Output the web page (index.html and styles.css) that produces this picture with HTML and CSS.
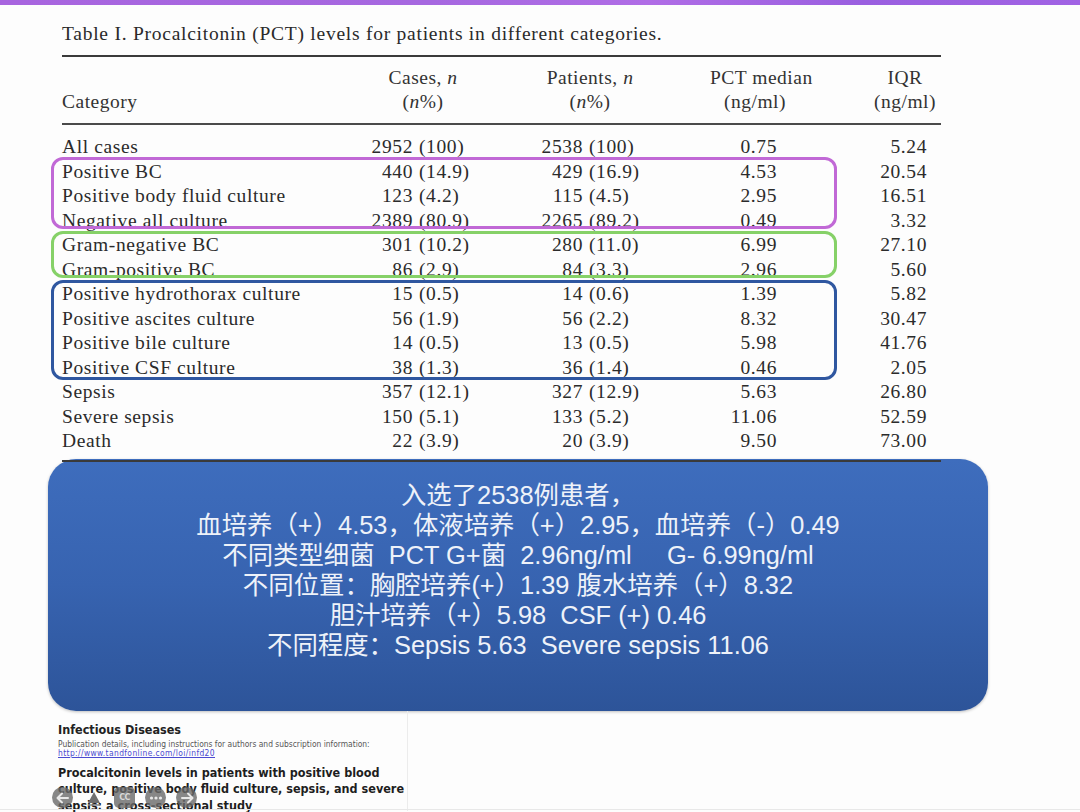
FILE: index.html
```html
<!DOCTYPE html>
<html lang="zh">
<head>
<meta charset="utf-8">
<title>PCT table</title>
<link rel="stylesheet" href="styles.css">
</head>
<body>
<div class="topbar"></div>
<main class="page">
  <div class="table-wrap">
    <p class="caption">Table I. Procalcitonin (PCT) levels for patients in different categories.</p>
    <div class="thead">
      <div class="th cat">Category</div>
      <div class="th cases">Cases, <i>n</i><br>(<i>n</i>%)</div>
      <div class="th pats">Patients, <i>n</i><br>(<i>n</i>%)</div>
      <div class="th pct">PCT median<br>(ng/ml)</div>
      <div class="th iqr">IQR<br>(ng/ml)</div>
    </div>
    <div class="tbody">
      <div class="row"><span class="c">All cases</span><span class="n1"><b>2952</b>(100)</span><span class="n2"><b>2538</b>(100)</span><span class="m">0.75</span><span class="q">5.24</span></div>
      <div class="row"><span class="c">Positive BC</span><span class="n1"><b>440</b>(14.9)</span><span class="n2"><b>429</b>(16.9)</span><span class="m">4.53</span><span class="q">20.54</span></div>
      <div class="row"><span class="c">Positive body fluid culture</span><span class="n1"><b>123</b>(4.2)</span><span class="n2"><b>115</b>(4.5)</span><span class="m">2.95</span><span class="q">16.51</span></div>
      <div class="row"><span class="c">Negative all culture</span><span class="n1"><b>2389</b>(80.9)</span><span class="n2"><b>2265</b>(89.2)</span><span class="m">0.49</span><span class="q">3.32</span></div>
      <div class="row"><span class="c">Gram-negative BC</span><span class="n1"><b>301</b>(10.2)</span><span class="n2"><b>280</b>(11.0)</span><span class="m">6.99</span><span class="q">27.10</span></div>
      <div class="row"><span class="c">Gram-positive BC</span><span class="n1"><b>86</b>(2.9)</span><span class="n2"><b>84</b>(3.3)</span><span class="m">2.96</span><span class="q">5.60</span></div>
      <div class="row"><span class="c">Positive hydrothorax culture</span><span class="n1"><b>15</b>(0.5)</span><span class="n2"><b>14</b>(0.6)</span><span class="m">1.39</span><span class="q">5.82</span></div>
      <div class="row"><span class="c">Positive ascites culture</span><span class="n1"><b>56</b>(1.9)</span><span class="n2"><b>56</b>(2.2)</span><span class="m">8.32</span><span class="q">30.47</span></div>
      <div class="row"><span class="c">Positive bile culture</span><span class="n1"><b>14</b>(0.5)</span><span class="n2"><b>13</b>(0.5)</span><span class="m">5.98</span><span class="q">41.76</span></div>
      <div class="row"><span class="c">Positive CSF culture</span><span class="n1"><b>38</b>(1.3)</span><span class="n2"><b>36</b>(1.4)</span><span class="m">0.46</span><span class="q">2.05</span></div>
      <div class="row"><span class="c">Sepsis</span><span class="n1"><b>357</b>(12.1)</span><span class="n2"><b>327</b>(12.9)</span><span class="m">5.63</span><span class="q">26.80</span></div>
      <div class="row"><span class="c">Severe sepsis</span><span class="n1"><b>150</b>(5.1)</span><span class="n2"><b>133</b>(5.2)</span><span class="m">11.06</span><span class="q">52.59</span></div>
      <div class="row"><span class="c">Death</span><span class="n1"><b>22</b>(3.9)</span><span class="n2"><b>20</b>(3.9)</span><span class="m">9.50</span><span class="q">73.00</span></div>
    </div>
    <div class="hl hl-purple"></div>
    <div class="hl hl-green"></div>
    <div class="hl hl-blue"></div>
  </div>

  <section class="note">
    <p>入选了2538例患者，</p>
    <p>血培养（+）4.53，体液培养（+）2.95，血培养（-）0.49</p>
    <p>不同类型细菌&nbsp; PCT G+菌&nbsp; 2.96ng/ml&nbsp;&nbsp;&nbsp;&nbsp; G- 6.99ng/ml</p>
    <p>不同位置：胸腔培养(+）1.39 腹水培养（+）8.32</p>
    <p>胆汁培养（+）5.98&nbsp; CSF (+) 0.46</p>
    <p>不同程度：Sepsis 5.63&nbsp; Severe sepsis 11.06</p>
  </section>

  <section class="doc">
    <h2 class="journal">Infectious Diseases</h2>
    <p class="pubinfo">Publication details, including instructions for authors and subscription information:</p>
    <p class="publink">http://www.tandfonline.com/loi/infd20</p>
    <h1 class="article">Procalcitonin levels in patients with positive blood culture, positive body fluid culture, sepsis, and severe sepsis: a cross-sectional study</h1>
  </section>
</main>

<div class="controls">
  <span class="ctl round"><svg viewBox="0 0 20 20" width="20" height="20"><path d="M15 10H5M9 5.5L4.5 10 9 14.5" fill="none" stroke="#e8e8e8" stroke-width="2" stroke-linecap="round" stroke-linejoin="round"/></svg></span>
  <span class="ctl tri"><svg viewBox="0 0 20 20" width="20" height="20"><path d="M10 4L16 15H4Z" fill="#6e6e6e"/><path d="M4 17h12" stroke="#8a8a8a" stroke-width="1.5"/></svg></span>
  <span class="ctl cc">CC</span>
  <span class="ctl round"><svg viewBox="0 0 20 20" width="20" height="20"><circle cx="5.5" cy="10" r="1.6" fill="#e8e8e8"/><circle cx="10" cy="10" r="1.6" fill="#e8e8e8"/><circle cx="14.5" cy="10" r="1.6" fill="#e8e8e8"/></svg></span>
  <span class="ctl round"><svg viewBox="0 0 20 20" width="20" height="20"><path d="M5 10h10M11 5.5l4.5 4.5-4.5 4.5" fill="none" stroke="#e8e8e8" stroke-width="2" stroke-linecap="round" stroke-linejoin="round"/></svg></span>
</div>
</body>
</html>
```
FILE: styles.css
```css
* { box-sizing: border-box; }
html, body { margin: 0; padding: 0; }
body {
  width: 1080px;
  height: 812px;
  overflow: hidden;
  background: #fdfdfd;
  position: relative;
  font-family: "Liberation Serif", serif;
  color: #2a2a2a;
}
body::after {
  content: "";
  position: absolute;
  left: 0;
  right: 0;
  bottom: 2px;
  height: 1px;
  background: #e8e8e8;
}
.topbar {
  height: 5px;
  background: linear-gradient(90deg, #a865df 0%, #a668e0 40%, #b06de6 60%, #9a5fe0 80%, #a163e4 100%);
}
.page { display: flex; flex-direction: column; }

.table-wrap {
  position: relative;
  margin-left: 62px;
  width: 879px;
  padding-top: 18px;
}
.caption {
  margin: 0;
  font-size: 19.5px;
  line-height: 22px;
  color: #2a2a2a;
  letter-spacing: 0.75px;
  white-space: nowrap;
}
.thead {
  margin-top: 10px;
  border-top: 2px solid #3a3a3a;
  border-bottom: 2px solid #4a4a4a;
  display: grid;
  grid-template-columns: 298px 160px 160px 120px 141px;
  padding: 9px 0 9px;
  font-size: 19.5px;
  letter-spacing: 0.5px;
  line-height: 24px;
  color: #333;
}
.th { text-align: center; white-space: nowrap; }
.th.cat { text-align: left; align-self: end; }
.th.cases { padding-right: 34px; }
.th.pats { padding-right: 20px; }
.th.pct { padding-left: 30px; }
.th.iqr { padding-left: 69px; }

.tbody {
  padding: 10px 0 6px;
  border-bottom: 2px solid #3a3a3a;
}
.row {
  display: grid;
  grid-template-columns: 298px 160px 160px 120px 141px;
  height: 24.5px;
  align-items: center;
  font-size: 19.5px;
  letter-spacing: 0.6px;
  color: #2b2b2b;
}
.row .c { white-space: nowrap; }
.row .n1, .row .n2 { display: flex; white-space: nowrap; }
.row .n1 b, .row .n2 b { font-weight: normal; text-align: right; margin-right: 6px; }
.row .n1 b { width: 53px; }
.row .n2 b { width: 63px; }
.row .m { text-align: right; padding-right: 23px; }
.row .q { text-align: right; padding-right: 14px; }

.hl {
  position: absolute;
  left: -11px;
  width: 786px;
  border: 3px solid;
  border-radius: 12px;
}
.hl-purple { top: 152px; height: 72px; border-color: #c169d6; }
.hl-green { top: 226px; height: 47px; border-color: #86d168; }
.hl-blue { top: 275px; height: 100px; border-color: #2f57a0; }

.note {
  margin: -3px 0 0 48px;
  width: 940px;
  height: 252px;
  border-radius: 28px;
  background: linear-gradient(180deg, #3e6dbd 0%, #3763b0 50%, #2d5499 100%);
  box-shadow: 0 1px 3px rgba(0,0,0,0.25);
  padding-top: 21px;
  color: #eef2f9;
  font-family: "Liberation Sans", "Noto Sans CJK SC", sans-serif;
  font-size: 25.4px;
  line-height: 30px;
  text-align: center;
}
.note p { margin: 0; white-space: nowrap; }

.doc {
  margin-left: 48px;
  width: 360px;
  height: 100px;
  border-right: 1px solid #ececec;
  padding: 11px 0 0 10px;
  font-family: "DejaVu Sans Condensed", "DejaVu Sans", sans-serif;
  color: #222;
}
.journal {
  margin: 0 0 2px;
  font-size: 12.5px;
  line-height: 16px;
  font-weight: bold;
}
.pubinfo {
  margin: 0;
  font-size: 8.4px;
  line-height: 9px;
  color: #555;
  white-space: nowrap;
}
.publink {
  margin: 0;
  font-size: 8.4px;
  line-height: 9px;
  letter-spacing: 0.4px;
  color: #4a4ad0;
  text-decoration: underline;
}
.article {
  margin: 7px 0 0;
  font-size: 12.5px;
  line-height: 16.5px;
  font-weight: bold;
  color: #1e1e1e;
}

.controls {
  position: absolute;
  left: 52px;
  top: 787px;
  display: flex;
  gap: 10px;
  align-items: center;
}
.ctl {
  width: 21px;
  height: 21px;
  flex: none;
  display: flex;
  align-items: center;
  justify-content: center;
}
.ctl.round { border-radius: 50%; background: rgba(105,105,105,0.8); }
.ctl.tri { background: transparent; }
.ctl.cc {
  border-radius: 5px;
  background: rgba(105,105,105,0.8);
  color: #d8d8d8;
  font-family: "DejaVu Sans", sans-serif;
  font-size: 8px;
  letter-spacing: -0.5px;
  font-weight: bold;
}
```
